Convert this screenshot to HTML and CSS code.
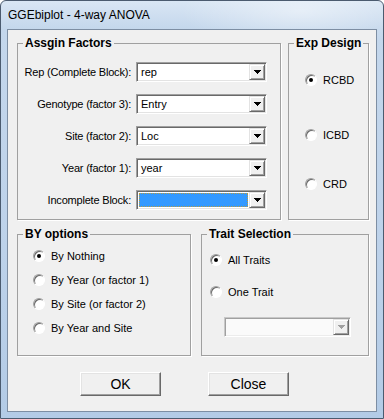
FILE: index.html
```html
<!DOCTYPE html>
<html lang="en">
<head>
    <meta charset="UTF-8">
    <meta name="viewport" content="width=device-width, initial-scale=1.0">
    <title>GGEbiplot - 4-way ANOVA</title>
    <link rel="stylesheet" href="styles.css">
</head>
<body>
    <div class="window">
        <div class="titlebar">GGEbiplot - 4-way ANOVA</div>
        <div class="client">
            <div class="row top-row">
                <fieldset class="group factors">
                    <legend>Assgin Factors</legend>
                    <div class="field">
                        <label>Rep (Complete Block):</label>
                        <div class="combo"><span class="value">rep</span><span class="drop"><svg width="7" height="4" viewBox="0 0 7 4" shape-rendering="crispEdges"><path d="M0 0h7v1H0zM1 1h5v1H1zM2 2h3v1H2zM3 3h1v1H3z"/></svg></span></div>
                    </div>
                    <div class="field">
                        <label>Genotype (factor 3):</label>
                        <div class="combo"><span class="value">Entry</span><span class="drop"><svg width="7" height="4" viewBox="0 0 7 4" shape-rendering="crispEdges"><path d="M0 0h7v1H0zM1 1h5v1H1zM2 2h3v1H2zM3 3h1v1H3z"/></svg></span></div>
                    </div>
                    <div class="field">
                        <label>Site (factor 2):</label>
                        <div class="combo"><span class="value">Loc</span><span class="drop"><svg width="7" height="4" viewBox="0 0 7 4" shape-rendering="crispEdges"><path d="M0 0h7v1H0zM1 1h5v1H1zM2 2h3v1H2zM3 3h1v1H3z"/></svg></span></div>
                    </div>
                    <div class="field">
                        <label>Year (factor 1):</label>
                        <div class="combo"><span class="value">year</span><span class="drop"><svg width="7" height="4" viewBox="0 0 7 4" shape-rendering="crispEdges"><path d="M0 0h7v1H0zM1 1h5v1H1zM2 2h3v1H2zM3 3h1v1H3z"/></svg></span></div>
                    </div>
                    <div class="field">
                        <label>Incomplete Block:</label>
                        <div class="combo"><span class="value selected"></span><span class="drop"><svg width="7" height="4" viewBox="0 0 7 4" shape-rendering="crispEdges"><path d="M0 0h7v1H0zM1 1h5v1H1zM2 2h3v1H2zM3 3h1v1H3z"/></svg></span></div>
                    </div>
                </fieldset>
                <fieldset class="group design">
                    <legend>Exp Design</legend>
                    <div class="option"><span class="radio checked"></span>RCBD</div>
                    <div class="option icbd"><span class="radio"></span>ICBD</div>
                    <div class="option crd"><span class="radio"></span>CRD</div>
                </fieldset>
            </div>
            <div class="row bottom-row">
                <fieldset class="group by">
                    <legend>BY options</legend>
                    <div class="option"><span class="radio checked"></span>By Nothing</div>
                    <div class="option"><span class="radio"></span>By Year (or factor 1)</div>
                    <div class="option"><span class="radio"></span>By Site (or factor 2)</div>
                    <div class="option"><span class="radio"></span>By Year and Site</div>
                </fieldset>
                <fieldset class="group trait">
                    <legend>Trait Selection</legend>
                    <div class="option"><span class="radio checked"></span>All Traits</div>
                    <div class="option"><span class="radio"></span>One Trait</div>
                    <div class="combo disabled"><span class="value"></span><span class="drop"><svg width="7" height="4" viewBox="0 0 7 4" shape-rendering="crispEdges"><path d="M0 0h7v1H0zM1 1h5v1H1zM2 2h3v1H2zM3 3h1v1H3z"/></svg></span></div>
                </fieldset>
            </div>
            <div class="actions">
                <button>OK</button>
                <button>Close</button>
            </div>
        </div>
    </div>
</body>
</html>
```

FILE: styles.css
```css
body {
    margin: 0;
    background-color: #ffffff;
    font-family: "Liberation Sans", Arial, sans-serif;
    font-size: 11px;
    color: #000;
}

.window {
    width: 384px;
    height: 419px;
    box-sizing: border-box;
    border: 1px solid #4b5b6f;
    border-radius: 6px 6px 0 0;
    display: flex;
    flex-direction: column;
    background:
        radial-gradient(ellipse 120px 40px at 300px 10px, rgba(255, 255, 255, 0.45), rgba(255, 255, 255, 0)),
        linear-gradient(to bottom, #d9e6f4 0, #c4d7ec 28px, #bdd2ea 60%, #b3cbe6 100%);
}

.titlebar {
    height: 28px;
    display: flex;
    align-items: center;
    padding-left: 7px;
    font-size: 12px;
    color: #000;
}

.client {
    flex: 1;
    margin: 0 6px 6px 6px;
    border: 1px solid #7d8ea3;
    background-color: #f0f0f0;
    padding: 6px 7px 0 9px;
}

.row {
    display: flex;
}

.top-row {
    height: 184px;
    gap: 7px;
}

.bottom-row {
    height: 129px;
    gap: 10px;
    margin-top: 7px;
}

.group {
    margin: 0;
    min-width: 0;
    box-sizing: border-box;
    border: 1px solid #a0a0a0;
    box-shadow: 1px 1px 0 #ffffff;
    padding: 0;
}

.group legend {
    margin-left: 5px;
    padding: 0 2px;
    font-weight: bold;
    font-size: 12px;
    line-height: 14px;
    white-space: nowrap;
}

.factors { width: 264px; padding-top: 12px; }
.design { width: 81px; padding-top: 23px; }
.by { width: 174px; padding-top: 8px; }
.trait { width: 168px; padding-top: 12px; }

.design .option { margin-left: 16px; }
.by .option { margin-left: 15px; }
.trait .option { margin-left: 8px; }

.field {
    display: flex;
    align-items: center;
    height: 20px;
    margin-bottom: 12px;
}

.field label {
    width: 113px;
    margin-right: 5px;
    text-align: right;
    letter-spacing: -0.2px;
}

.combo {
    display: flex;
    width: 131px;
    height: 20px;
    box-sizing: border-box;
    padding: 1px;
    border: 1px solid;
    border-color: #a0a0a0 #ffffff #ffffff #a0a0a0;
    box-shadow: inset 1px 1px 0 #696969, inset -1px -1px 0 #e3e3e3;
    background-color: #ffffff;
}

.combo .value {
    flex: 1;
    padding-left: 3px;
    line-height: 16px;
}

.combo .value.selected {
    margin: 1px;
    background-color: #3399ff;
    outline: 1px dotted #b89a40;
    outline-offset: -1px;
}

.combo .drop {
    width: 16px;
    height: 16px;
    box-sizing: border-box;
    display: flex;
    align-items: center;
    justify-content: center;
    background-color: #f0f0f0;
    border: 1px solid;
    border-color: #e3e3e3 #696969 #696969 #e3e3e3;
    box-shadow: inset 1px 1px 0 #ffffff, inset -1px -1px 0 #a0a0a0;
}

.combo.disabled {
    width: 127px;
    margin: 18px 0 0 22px;
    background-color: #fafafa;
    border-color: #c8c8c8 #ffffff #ffffff #c8c8c8;
    box-shadow: inset 1px 1px 0 #a0a0a0, inset -1px -1px 0 #ececec;
}

.combo.disabled .drop {
    fill: #a0a0a0;
}

.option {
    display: flex;
    align-items: center;
    height: 14px;
}

.by .option + .option { margin-top: 10px; }
.trait .option + .option { margin-top: 18px; }
.design .icbd { margin-top: 41px; }
.design .crd { margin-top: 35px; }

.radio {
    position: relative;
    flex: none;
    width: 12px;
    height: 12px;
    box-sizing: border-box;
    margin-right: 6px;
    border-radius: 50%;
    border: 1px solid;
    border-color: #a0a0a0 #ffffff #ffffff #a0a0a0;
    background-color: #ffffff;
    box-shadow: inset 1px 1px 0 #696969;
}

.radio.checked::after {
    content: '';
    position: absolute;
    left: 3px;
    top: 3px;
    width: 4px;
    height: 4px;
    border-radius: 50%;
    background-color: #000;
}

.actions {
    display: flex;
    gap: 47px;
    margin-top: 16px;
    padding-left: 63px;
}

.actions button {
    width: 81px;
    height: 24px;
    padding: 0;
    font-family: "Liberation Sans", Arial, sans-serif;
    font-size: 14px;
    color: #000;
    background-color: #f0f0f0;
    border: 1px solid;
    border-color: #ffffff #696969 #696969 #ffffff;
    box-shadow: inset -1px -1px 0 #a0a0a0, inset 1px 1px 0 #e3e3e3;
}
```
